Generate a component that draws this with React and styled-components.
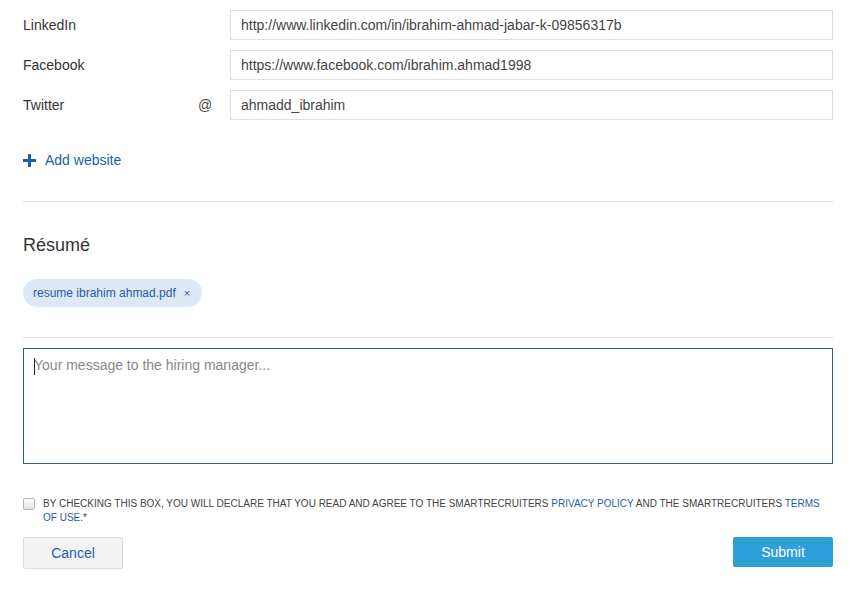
import React from "react";
import styled, { createGlobalStyle } from "styled-components";

const Global = createGlobalStyle`
  html, body { margin: 0; padding: 0; background: #fff; }
  body { font-family: "Liberation Sans", Arial, sans-serif; color: #333; }
  * { box-sizing: border-box; }
`;

const Page = styled.div`
  width: 863px;
  padding: 10px 30px 0 23px;
`;

const Fields = styled.div`
  display: flex;
  flex-direction: column;
  gap: 10px;
`;

const Row = styled.div`
  display: flex;
  align-items: center;
  height: 30px;
`;

const Label = styled.div`
  width: 175px;
  font-size: 14px;
  color: #333;
`;

const Prefix = styled.div`
  width: 32px;
  font-size: 14px;
  color: #444;
`;

const Input = styled.div`
  flex: 1;
  height: 30px;
  border: 1px solid #ddd;
  padding: 0 10px;
  display: flex;
  align-items: center;
  font-size: 14px;
  color: #444;
  background: #fff;
`;

const AddLink = styled.a`
  display: flex;
  align-items: center;
  gap: 9px;
  margin-top: 30px;
  height: 20px;
  font-size: 14px;
  color: #1f5ea8;
  text-decoration: none;
`;

const Divider = styled.hr`
  border: 0;
  border-top: 1px solid #e2e2e2;
  margin: ${(p) => p.$top}px 0 0;
`;

const Heading = styled.h3`
  margin: 31px 0 0;
  font-size: 18px;
  font-weight: normal;
  line-height: 24px;
  color: #333;
`;

const Chip = styled.div`
  display: inline-flex;
  align-items: center;
  gap: 8px;
  margin-top: 22px;
  height: 28px;
  padding: 0 12px 0 10px;
  border-radius: 14px;
  background: #dde8f3;
  color: #1f5ea8;
  font-size: 12px;
`;

const ChipClose = styled.span`
  font-size: 11px;
  color: #1f5ea8;
`;

const Message = styled.div`
  margin-top: 10px;
  height: 116px;
  border: 1px solid #2b5d98;
  padding: 8px 10px;
  font-size: 14px;
  color: #888;
  position: relative;
`;

const Caret = styled.span`
  position: absolute;
  left: 10px;
  top: 9px;
  width: 1px;
  height: 17px;
  background: #222;
`;

const Consent = styled.div`
  display: flex;
  gap: 8px;
  margin-top: 33px;
`;

const Box = styled.span`
  flex: none;
  width: 12px;
  height: 12px;
  margin-top: 1px;
  border: 1px solid #b5b5b5;
  border-radius: 2px;
  background: linear-gradient(#fafafa, #e4e4e4);
`;

const ConsentText = styled.div`
  font-size: 10px;
  line-height: 14px;
  color: #444;
  text-transform: uppercase;
`;

const Link = styled.a`
  color: #1f5ea8;
  text-decoration: none;
`;

const Actions = styled.div`
  display: flex;
  justify-content: space-between;
  align-items: flex-start;
  margin-top: 12px;
`;

const Button = styled.button`
  width: 100px;
  height: ${(p) => (p.$primary ? 30 : 32)}px;
  border-radius: 2px;
  font-family: "Liberation Sans", Arial, sans-serif;
  font-size: 14px;
  cursor: pointer;
  border: 1px solid ${(p) => (p.$primary ? "#2d9fd9" : "#dcdcdc")};
  background: ${(p) => (p.$primary ? "#2d9fd9" : "#f2f2f2")};
  color: ${(p) => (p.$primary ? "#fff" : "#1f5ea8")};
`;

const fields = [
  { label: "LinkedIn", value: "http://www.linkedin.com/in/ibrahim-ahmad-jabar-k-09856317b" },
  { label: "Facebook", value: "https://www.facebook.com/ibrahim.ahmad1998" },
  { label: "Twitter", prefix: "@", value: "ahmadd_ibrahim" },
];

export default function App() {
  return (
    <>
      <Global />
      <Page>
        <Fields>
          {fields.map((f) => (
            <Row key={f.label}>
              <Label>{f.label}</Label>
              <Prefix>{f.prefix}</Prefix>
              <Input>{f.value}</Input>
            </Row>
          ))}
        </Fields>
        <AddLink href="#">
          <svg width="13" height="13" viewBox="0 0 13 13">
            <rect x="5" y="0" width="3" height="13" fill="#1f5ea8" />
            <rect x="0" y="5" width="13" height="3" fill="#1f5ea8" />
          </svg>
          Add website
        </AddLink>
        <Divider $top={31} />
        <Heading>Résumé</Heading>
        <Chip>
          resume ibrahim ahmad.pdf <ChipClose>×</ChipClose>
        </Chip>
        <Divider $top={30} />
        <Message>
          <Caret />
          Your message to the hiring manager...
        </Message>
        <Consent>
          <Box />
          <ConsentText>
            By checking this box, you will declare that you read and agree to the SmartRecruiters{" "}
            <Link href="#">Privacy Policy</Link> and the SmartRecruiters{" "}
            <Link href="#">Terms of use</Link>.*
          </ConsentText>
        </Consent>
        <Actions>
          <Button>Cancel</Button>
          <Button $primary>Submit</Button>
        </Actions>
      </Page>
    </>
  );
}
